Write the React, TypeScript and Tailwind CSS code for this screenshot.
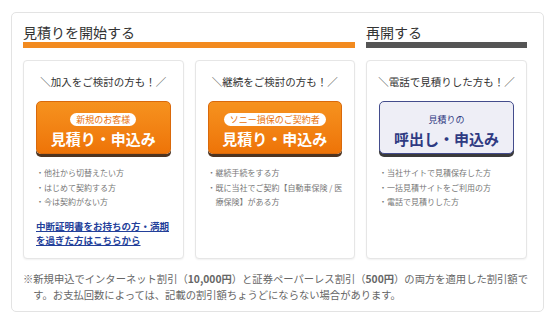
import { FC, ReactNode } from "react";

const font = {
  fontFamily: '"Noto Sans CJK JP", "Noto Sans", sans-serif',
};

type CardProps = {
  lead: string;
  button: ReactNode;
  items: string[];
  children?: ReactNode;
};

const Card: FC<CardProps> = ({ lead, button, items, children }) => (
  <div className="h-[199px] rounded-[4px] border border-[#e6e6e6] bg-white px-[12px] pt-[13px] shadow-[0_1px_2px_rgba(0,0,0,0.06)]">
    <p className="-mx-[4px] whitespace-nowrap text-center text-[10.5px] leading-[16px] text-[#333]">{lead}</p>
    <div className="mt-[11px]">{button}</div>
    <ul className="-mr-[6px] mt-[12px] text-[8px] leading-[14.5px] text-[#777]">
      {items.map((item) => (
        <li key={item} className="flex">
          <span className="w-[1em] shrink-0">・</span>
          <span>{item}</span>
        </li>
      ))}
    </ul>
    {children}
  </div>
);

const OrangeButton: FC<{ label: string }> = ({ label }) => (
  <div className="flex h-[53px] cursor-pointer flex-col items-center rounded-[5px] border border-[#d9690b] bg-gradient-to-b from-[#f6921e] to-[#ee7407] pt-[11px] shadow-[0_3px_0_#4e3420]">
    <span className="rounded-full bg-white px-[6px] text-[9px] leading-[13px] text-[#e8730c]">{label}</span>
    <span className="mt-[3px] text-[15px] font-bold leading-[20px] text-white">見積り・申込み</span>
  </div>
);

const ResumeButton: FC = () => (
  <div className="flex h-[53px] cursor-pointer flex-col items-center rounded-[5px] border border-[#434c8c] bg-[#eeeef6] pt-[11px] shadow-[0_3px_0_#3b3b3b]">
    <span className="text-[9px] leading-[13px] text-[#2f3a82]">見積りの</span>
    <span className="mt-[3px] text-[15px] font-bold leading-[20px] text-[#2f3a82]">呼出し・申込み</span>
  </div>
);

const App: FC = () => {
  return (
    <div className="min-h-[314px] bg-white pl-[11px] pt-[12px]" style={font}>
      <div className="h-[300px] w-[533px] rounded-[5px] border border-[#e3e3e3] pl-[11px] pt-[9px]">
        <div className="grid grid-cols-[332px_161px] gap-x-[11px]">
          <section>
            <h2 className="text-[14px] font-normal leading-[20px] text-[#333]">見積りを開始する</h2>
            <div className="h-[6px] bg-[#f28a1f]" />
            <div className="mt-[12px] grid grid-cols-2 gap-x-[11px]">
              <Card
                lead="＼加入をご検討の方も！／"
                button={<OrangeButton label="新規のお客様" />}
                items={["他社から切替えたい方", "はじめて契約する方", "今は契約がない方"]}
              >
                <a
                  href="#"
                  className="mt-[9px] block text-[9.5px] font-bold leading-[14px] text-[#23409a] underline"
                >
                  中断証明書をお持ちの方・満期を過ぎた方はこちらから
                </a>
              </Card>
              <Card
                lead="＼継続をご検討の方も！／"
                button={<OrangeButton label="ソニー損保のご契約者" />}
                items={["継続手続をする方", "既に当社でご契約【自動車保険 / 医療保険】がある方"]}
              />
            </div>
          </section>
          <section>
            <h2 className="text-[14px] font-normal leading-[20px] text-[#333]">再開する</h2>
            <div className="h-[6px] bg-[#555]" />
            <div className="mt-[12px]">
              <Card
                lead="＼電話で見積りした方も！／"
                button={<ResumeButton />}
                items={["当社サイトで見積保存した方", "一括見積サイトをご利用の方", "電話で見積りした方"]}
              />
            </div>
          </section>
        </div>
        <div className="mt-[12px] flex w-[510px] text-[10.3px] leading-[16px] text-[#666]">
          <span className="w-[1em] shrink-0">※</span>
          <div>
            <p className="whitespace-nowrap">
              新規申込でインターネット割引（<b>10,000円</b>）と証券ペーパーレス割引（<b>500円</b>）の両方を適用した割引額で
            </p>
            <p>す。お支払回数によっては、記載の割引額ちょうどにならない場合があります。</p>
          </div>
        </div>
      </div>
    </div>
  );
};

export default App;
